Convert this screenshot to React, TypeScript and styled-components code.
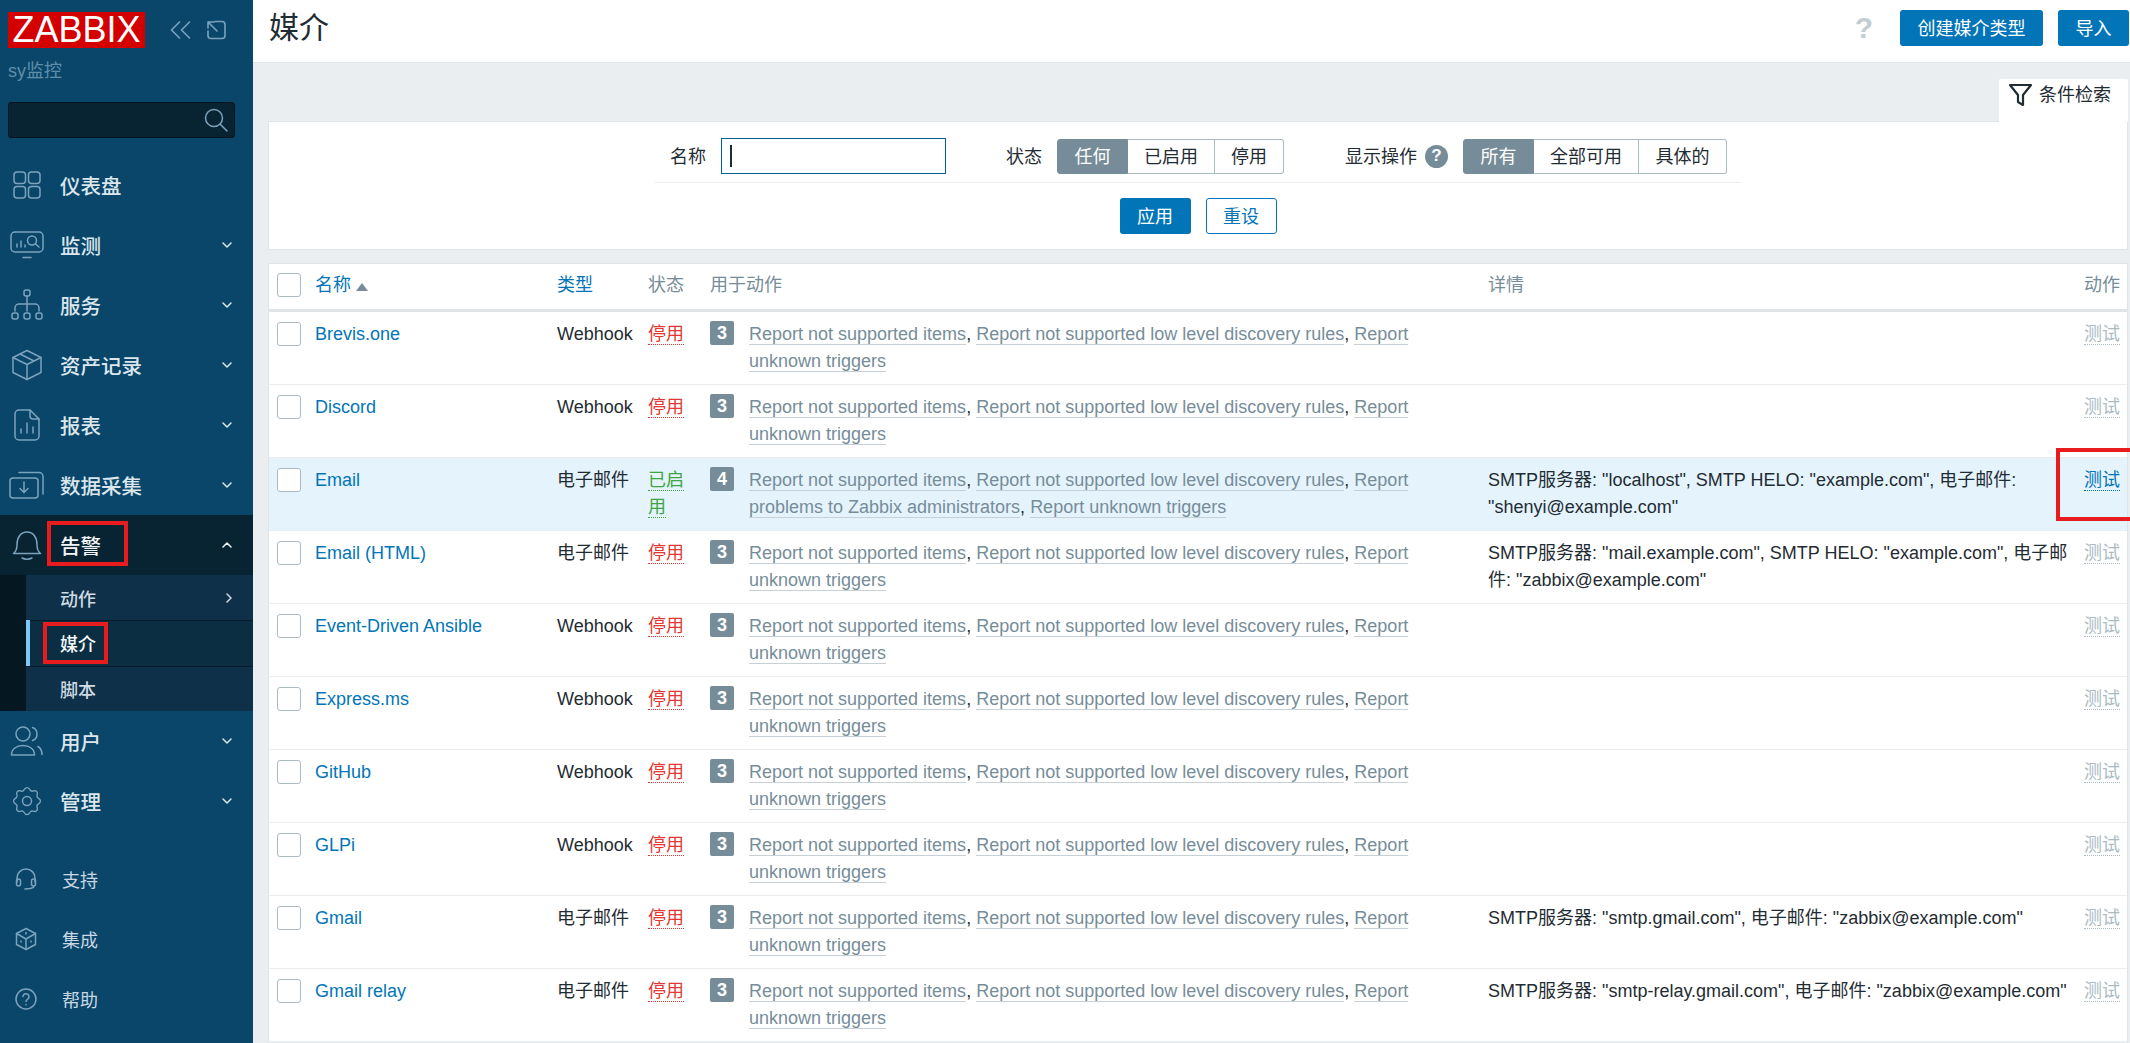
import React from "react";
import styled, { createGlobalStyle } from "styled-components";

const Global = createGlobalStyle`
  html, body { margin: 0; padding: 0; height: 100%; overflow: hidden; background: #ebeef0; }
  body { font-family: "Liberation Sans", "Noto Sans CJK SC", sans-serif; font-size: 18px; color: #1f2c33; }
  * { box-sizing: border-box; }
`;

const Page = styled.div`
  display: flex;
  width: 2130px;
  height: 1043px;
  overflow: hidden;
`;

/* ---------- sidebar ---------- */
const Sidebar = styled.aside`
  flex: 0 0 253px;
  display: flex;
  flex-direction: column;
  background: #0a466a;
  color: #dbe6ed;
`;
const Brand = styled.div`
  display: flex;
  align-items: center;
  padding: 12px 0 0 8px;
`;
const Logo = styled.div`
  width: 137px;
  height: 36px;
  background: #d40000;
  color: #fff;
  font-size: 36px;
  line-height: 36px;
  text-align: center;
  font-family: "Liberation Sans", sans-serif;
`;
const BrandIcons = styled.div`
  display: flex;
  align-items: center;
  gap: 15px;
  margin-left: 25px;
  color: #7ba3bd;
`;
const Instance = styled.div`
  margin: 11px 0 0 8px;
  font-size: 18px;
  line-height: 24px;
  color: #5f8fab;
`;
const SearchBox = styled.div`
  display: flex;
  align-items: center;
  justify-content: flex-end;
  width: 227px;
  height: 36px;
  margin: 19px 0 17px 8px;
  padding-right: 6px;
  background: #082433;
  border: 1px solid #05151f;
  border-radius: 3px;
  color: #7ba3bd;
`;
const Nav = styled.nav`
  display: flex;
  flex-direction: column;
`;
const NavRow = styled.div<{ $active?: boolean }>`
  position: relative;
  display: flex;
  align-items: center;
  height: 60px;
  padding-right: 21px;
  background: ${(p) => (p.$active ? "#082433" : "transparent")};
  color: ${(p) => (p.$active ? "#f4f7f9" : "#dbe6ed")};
`;
const NavIcon = styled.span`
  flex: 0 0 60px;
  display: flex;
  justify-content: center;
  padding-right: 6px;
  color: #7ba3bd;
`;
const NavLabel = styled.span`
  flex: 1;
  font-size: 20.5px;
  font-weight: 500;
`;
const SubWrap = styled.div`
  display: grid;
  grid-template-rows: 45px 46px 45px;
  padding-left: 26px;
  background: #051821;
`;
const SubRow = styled.div<{ $current?: boolean }>`
  position: relative;
  display: flex;
  align-items: center;
  padding: 0 21px 0 ${(p) => (p.$current ? "30px" : "34px")};
  font-size: 18px;
  font-weight: 500;
  background: ${(p) => (p.$current ? "#0b2e42" : "#0e3049")};
  color: ${(p) => (p.$current ? "#f4f7f9" : "#cfdbe3")};
  border-left: ${(p) => (p.$current ? "4px solid #7ec8f8" : "0")};
  &:not(:first-child) { box-shadow: inset 0 1px 0 #061c2a; }
`;
const SubLabel = styled.span`
  flex: 1;
`;
const FooterNav = styled.div`
  display: flex;
  flex-direction: column;
  margin-top: 18px;
`;
const FooterRow = styled.div`
  display: flex;
  align-items: center;
  height: 60px;
  font-size: 18px;
  color: #c9d8e2;
`;
const FooterIcon = styled.span`
  flex: 0 0 62px;
  display: flex;
  justify-content: center;
  padding-right: 11px;
  color: #7ba3bd;
`;
const RedBox = styled.span<{ $l: number; $t: number; $w: number; $h: number }>`
  position: absolute;
  left: ${(p) => p.$l}px;
  top: ${(p) => p.$t}px;
  width: ${(p) => p.$w}px;
  height: ${(p) => p.$h}px;
  border: 4px solid #e81c1f;
  pointer-events: none;
`;

/* ---------- main ---------- */
const Main = styled.main`
  flex: 1;
  min-width: 0;
  display: flex;
  flex-direction: column;
`;
const Header = styled.header`
  display: flex;
  align-items: center;
  height: 63px;
  padding: 0 1px 6px 16px;
  background: #fff;
  border-bottom: 1px solid #dfe4e7;
`;
const Title = styled.h1`
  flex: 1;
  margin: 0;
  font-size: 30px;
  font-weight: 400;
  line-height: 40px;
  color: #1f2c33;
`;
const HelpMark = styled.span`
  margin-right: 27px;
  font-size: 30px;
  font-weight: 700;
  line-height: 36px;
  color: #c3ced4;
`;
const PrimaryButton = styled.button`
  height: 36px;
  padding: 0 17.5px 2px;
  border: 0;
  border-radius: 3px;
  background: #0275b8;
  color: #fff;
  font: inherit;
  font-size: 18px;
  & + & { margin-left: 15px; }
`;
const Content = styled.div`
  flex: 1;
  padding: 16px 2px 0 15px;
  overflow: hidden;
`;
const TabRow = styled.div`
  display: flex;
  justify-content: flex-end;
`;
const FilterTab = styled.div`
  display: flex;
  align-items: flex-start;
  gap: 6px;
  width: 129px;
  height: 43px;
  margin-bottom: -1px;
  padding: 4px 0 0 9px;
  background: #fff;
  font-size: 18px;
  line-height: 24px;
  border-radius: 2px 2px 0 0;
  position: relative;
  z-index: 1;
`;
const FilterPanel = styled.section`
  height: 129px;
  padding-top: 17px;
  background: #fff;
  border: 1px solid #dfe4e7;
`;
const FilterGrid = styled.div`
  display: flex;
  align-items: center;
  width: 1086px;
  height: 44px;
  margin: 0 auto;
  padding: 0 0 9px 15px;
  border-bottom: 1px solid #ebeef0;
`;
const FieldLabel = styled.label<{ $gap: number; $lead?: number }>`
  margin-left: ${(p) => p.$lead ?? 0}px;
  margin-right: ${(p) => p.$gap}px;
  padding-bottom: 2px;
  font-size: 18px;
`;
const TextInput = styled.div`
  display: flex;
  align-items: center;
  width: 225px;
  height: 36px;
  padding-left: 8px;
  border: 1px solid #015e94;
  background: #fff;
`;
const Caret = styled.span`
  width: 2px;
  height: 22px;
  background: #1f2c33;
`;
const Segmented = styled.div`
  display: flex;
  height: 35px;
`;
const Segment = styled.div<{ $on?: boolean; $w: number }>`
  display: flex;
  align-items: center;
  justify-content: center;
  width: ${(p) => p.$w}px;
  padding-bottom: 2px;
  font-size: 18px;
  background: ${(p) => (p.$on ? "#768d99" : "#fff")};
  color: ${(p) => (p.$on ? "#fff" : "#1f2c33")};
  border: 1px solid ${(p) => (p.$on ? "#768d99" : "#acbbc2")};
  border-left-width: ${(p) => (p.$on ? 1 : 0)}px;
  &:first-child { border-radius: 3px 0 0 3px; }
  &:last-child { border-radius: 0 3px 3px 0; }
`;
const HelpDot = styled.span`
  display: flex;
  align-items: center;
  justify-content: center;
  width: 23px;
  height: 23px;
  margin-right: 15px;
  border-radius: 50%;
  background: #768d99;
  color: #fff;
  font-size: 17px;
  font-weight: 700;
`;
const FilterActions = styled.div`
  display: flex;
  justify-content: center;
  gap: 15px;
  margin-top: 15px;
`;
const ApplyButton = styled.button`
  width: 71px;
  height: 36px;
  padding: 0 0 2px;
  border: 0;
  border-radius: 3px;
  background: #0275b8;
  color: #fff;
  font: inherit;
`;
const ResetButton = styled(ApplyButton)`
  background: #fff;
  color: #0275b8;
  border: 1px solid #0275b8;
`;

const Table = styled.table`
  width: 1860px;
  margin-top: 13px;
  table-layout: fixed;
  border-collapse: separate;
  border-spacing: 0;
  background: #fff;
  border-top: 1px solid #dfe4e7;
  border-left: 1px solid #dfe4e7;
  border-right: 1px solid #dfe4e7;
  font-size: 18px;
  line-height: 27px;
  color: #1f2c33;
`;
const Th = styled.th`
  height: 48px;
  padding: 0 8px 3px;
  font-weight: 400;
  text-align: left;
  color: #768d99;
  white-space: nowrap;
  border-bottom: 3px solid #dfe4e7;
`;
const SortLink = styled.span`
  color: #0275b8;
`;
const SortArrow = styled.i`
  display: inline-block;
  width: 0;
  height: 0;
  margin-left: 5px;
  border-left: 6px solid transparent;
  border-right: 6px solid transparent;
  border-bottom: 8px solid #768d99;
`;
const Tr = styled.tr<{ $hl?: boolean }>`
  background: ${(p) => (p.$hl ? "#e5f3fd" : "#fff")};
`;
const Td = styled.td`
  position: relative;
  height: 73px;
  padding: 9px 8px;
  vertical-align: top;
  border-bottom: 1px solid #ebeef0;
`;
const Check = styled.span`
  display: block;
  width: 24px;
  height: 24px;
  margin-top: 1px;
  background: #fff;
  border: 1px solid #acbbc2;
  border-radius: 3px;
`;
const HeadCheck = styled(Check)`
  margin-top: 0;
`;
const Link = styled.a`
  color: #0275b8;
`;
const Status = styled.span<{ $on?: boolean }>`
  color: ${(p) => (p.$on ? "#3da643" : "#e33734")};
  border-bottom: 1px dotted currentColor;
`;
const UsedWrap = styled.div`
  display: flex;
  align-items: flex-start;
`;
const Badge = styled.span`
  flex: 0 0 24px;
  height: 24px;
  margin-right: 15px;
  background: #768d99;
  border-radius: 2px;
  color: #fff;
  font-weight: 700;
  font-size: 18px;
  line-height: 24px;
  text-align: center;
`;
const UsedText = styled.div`
  color: #1f2c33;
`;
const ActionLink = styled.span`
  color: #768d99;
  border-bottom: 1px solid #c6d0d6;
`;
const TestLink = styled.span<{ $on?: boolean }>`
  color: ${(p) => (p.$on ? "#0275b8" : "#acbbc2")};
  white-space: nowrap;
  border-bottom: 1px dotted currentColor;
`;

/* ---------- icons ---------- */
const Svg: React.FC<{ w: number; h?: number; sw?: number; children: React.ReactNode }> = ({ w, h, sw = 1.5, children }) => (
  <svg width={w} height={h ?? w} viewBox={`0 0 ${w} ${h ?? w}`} fill="none" stroke="currentColor" strokeWidth={sw} strokeLinecap="round" strokeLinejoin="round">
    {children}
  </svg>
);

const IDash = () => (
  <Svg w={28}>
    <rect x="1" y="1" width="11.5" height="11.5" rx="3" />
    <rect x="15.5" y="1" width="11.5" height="11.5" rx="3" />
    <rect x="1" y="15.5" width="11.5" height="11.5" rx="3" />
    <rect x="15.5" y="15.5" width="11.5" height="11.5" rx="3" />
  </Svg>
);
const IMonitor = () => (
  <Svg w={34} h={28}>
    <rect x="1" y="1" width="32" height="20" rx="4" />
    <path d="M13 26.5h8M7 16v-3M11 16v-6M15 16v-2" />
    <circle cx="22" cy="9.5" r="4.5" />
    <path d="M25.5 13l3.5 3" />
  </Svg>
);
const IServices = () => (
  <Svg w={34} h={32}>
    <rect x="14" y="1" width="6" height="6" rx="2" />
    <path d="M17 7v8M5 22v-3a4 4 0 0 1 4-4h16a4 4 0 0 1 4 4v3M17 15v7" />
    <rect x="2" y="24" width="6" height="6" rx="2" />
    <rect x="14" y="24" width="6" height="6" rx="2" />
    <rect x="26" y="24" width="6" height="6" rx="2" />
  </Svg>
);
const IBox = () => (
  <Svg w={32}>
    <path d="M16 1.5 30 8.5v15L16 30.5 2 23.5v-15z" />
    <path d="M2 8.5 16 15.5 30 8.5M16 15.5v15M9 5l14 7" />
  </Svg>
);
const IReport = () => (
  <Svg w={28} h={32}>
    <path d="M17 1H6a4 4 0 0 0-4 4v22a4 4 0 0 0 4 4h16a4 4 0 0 0 4-4V10z" />
    <path d="M17 1v6a3 3 0 0 0 3 3h6M8 24v-4M14 24v-10M20 24v-6" />
  </Svg>
);
const IData = () => (
  <Svg w={36} h={28}>
    <rect x="1" y="7" width="28" height="20" rx="3" />
    <path d="M10 1.5h20a4 4 0 0 1 4 4V23M15 11v10M11 17.5l4 4 4-4" />
  </Svg>
);
const IBell = () => (
  <Svg w={30}>
    <path d="M1.5 23.5c2.5-2 3.5-4 3.5-9C5 7 9 2 15 2s10 5 10 12.500c0 5 1 7 3.500 9z" />
    <path d="M10 28c3 1.500 7 1.500 10 0" />
  </Svg>
);
const IUsers = () => (
  <Svg w={34} h={30}>
    <circle cx="13" cy="8" r="7" />
    <path d="M1.500 29c0-6 5-9.500 11.500-9.500S24.500 23 24.500 29zM22.500 1.500c3 1 4.500 3.500 4.500 6.500s-1.500 5.500-4.500 6.500M28 20.500c2.500 1.500 4 4 4 8" />
  </Svg>
);
const IGear = () => (
  <Svg w={32}>
    <circle cx="16" cy="16" r="4.500" />
    <path d="M13.500 2.500a3 3 0 0 1 5 0l.8 1.200a3 3 0 0 0 3.300 1.300l1.400-.4a3 3 0 0 1 3.500 3.500l-.4 1.400a3 3 0 0 0 1.300 3.300l1.200.8a3 3 0 0 1 0 5l-1.200.8a3 3 0 0 0-1.300 3.300l.4 1.400a3 3 0 0 1-3.500 3.500l-1.400-.4a3 3 0 0 0-3.300 1.300l-.8 1.200a3 3 0 0 1-5 0l-.8-1.200a3 3 0 0 0-3.300-1.300l-1.400.4a3 3 0 0 1-3.500-3.500l.4-1.400a3 3 0 0 0-1.300-3.300l-1.200-.8a3 3 0 0 1 0-5l1.200-.8a3 3 0 0 0 1.300-3.300l-.4-1.400a3 3 0 0 1 3.500-3.500l1.400.4a3 3 0 0 0 3.300-1.300z" transform="translate(1.600 1.600) scale(.9)" />
  </Svg>
);
const IHeadset = () => (
  <Svg w={22} h={22}>
    <path d="M2 14V10a9 9 0 0 1 18 0v4" />
    <rect x="1.500" y="11" width="4" height="7" rx="2" />
    <rect x="16.500" y="11" width="4" height="7" rx="2" />
    <path d="M19 18c0 2-2 2-4 2.500l-5 .5" />
  </Svg>
);
const IDice = () => (
  <Svg w={22} h={24}>
    <path d="M11 1.500l9.500 5v11l-9.500 5-9.500-5v-11z" />
    <path d="M1.500 6.500 11 12l9.500-5.500M11 12v10.500M11 5.500v1.500M6 14v1M16 14v1" />
  </Svg>
);
const IHelp = () => (
  <Svg w={22}>
    <circle cx="11" cy="11" r="10" />
    <path d="M8 8.500a3 3 0 1 1 4.500 2.800c-1 .6-1.500 1.200-1.500 2.200M11 16.500v.2" />
  </Svg>
);
const IChevDown = () => (
  <Svg w={10} h={6}>
    <path d="M1 1l4 4 4-4" />
  </Svg>
);
const IChevUp = () => (
  <Svg w={10} h={6}>
    <path d="M1 5l4-4 4 4" />
  </Svg>
);
const IChevRight = () => (
  <Svg w={6} h={10}>
    <path d="M1 1l4 4-4 4" />
  </Svg>
);
const ICollapse = () => (
  <Svg w={21} h={18} sw={1.6}>
    <path d="M9.500 1 1.500 9l8 8M19.500 1l-8 8 8 8" />
  </Svg>
);
const IWindow = () => (
  <Svg w={20} sw={1.6}>
    <path d="M9 1.500h7a3 3 0 0 1 3 3v11a3 3 0 0 1-3 3H5a3 3 0 0 1-3-3V11M2 2l9 9M2 2v6M2 2h6" />
  </Svg>
);
const ISearch = () => (
  <Svg w={24}>
    <circle cx="10" cy="10" r="8.500" />
    <path d="M16.500 16.500 23 23" />
  </Svg>
);
const IFunnel = () => (
  <Svg w={25} h={24} sw={2.2}>
    <path d="M2 2h21l-8 10v10l-5-3v-7z" />
  </Svg>
);

/* ---------- data ---------- */
const R = {
  a: "Report not supported items",
  b: "Report not supported low level discovery rules",
  c: "Report problems to Zabbix administrators",
  d: "Report unknown triggers",
};
type Row = { name: string; type: string; on?: boolean; count: number; actions: string[]; details?: string };
const base = [R.a, R.b, R.d];
const rows: Row[] = [
  { name: "Brevis.one", type: "Webhook", count: 3, actions: base },
  { name: "Discord", type: "Webhook", count: 3, actions: base },
  { name: "Email", type: "电子邮件", on: true, count: 4, actions: [R.a, R.b, R.c, R.d], details: 'SMTP服务器: "localhost", SMTP HELO: "example.com", 电子邮件: "shenyi@example.com"' },
  { name: "Email (HTML)", type: "电子邮件", count: 3, actions: base, details: 'SMTP服务器: "mail.example.com", SMTP HELO: "example.com", 电子邮件: "zabbix@example.com"' },
  { name: "Event-Driven Ansible", type: "Webhook", count: 3, actions: base },
  { name: "Express.ms", type: "Webhook", count: 3, actions: base },
  { name: "GitHub", type: "Webhook", count: 3, actions: base },
  { name: "GLPi", type: "Webhook", count: 3, actions: base },
  { name: "Gmail", type: "电子邮件", count: 3, actions: base, details: 'SMTP服务器: "smtp.gmail.com", 电子邮件: "zabbix@example.com"' },
  { name: "Gmail relay", type: "电子邮件", count: 3, actions: base, details: 'SMTP服务器: "smtp-relay.gmail.com", 电子邮件: "zabbix@example.com"' },
];

const navTop = [
  { label: "仪表盘", icon: <IDash />, chev: false },
  { label: "监测", icon: <IMonitor />, chev: true },
  { label: "服务", icon: <IServices />, chev: true },
  { label: "资产记录", icon: <IBox />, chev: true },
  { label: "报表", icon: <IReport />, chev: true },
  { label: "数据采集", icon: <IData />, chev: true },
];

export default function App() {
  return (
    <Page>
      <Global />
      <Sidebar>
        <Brand>
          <Logo>ZABBIX</Logo>
          <BrandIcons>
            <ICollapse />
            <IWindow />
          </BrandIcons>
        </Brand>
        <Instance>sy监控</Instance>
        <SearchBox>
          <ISearch />
        </SearchBox>
        <Nav>
          {navTop.map((n) => (
            <NavRow key={n.label}>
              <NavIcon>{n.icon}</NavIcon>
              <NavLabel>{n.label}</NavLabel>
              {n.chev && <IChevDown />}
            </NavRow>
          ))}
          <NavRow $active>
            <NavIcon>
              <IBell />
            </NavIcon>
            <NavLabel>告警</NavLabel>
            <IChevUp />
            <RedBox $l={47} $t={6} $w={81} $h={45} />
          </NavRow>
          <SubWrap>
            <SubRow>
              <SubLabel>动作</SubLabel>
              <IChevRight />
            </SubRow>
            <SubRow $current>
              <SubLabel>媒介</SubLabel>
              <RedBox $l={13} $t={2} $w={65} $h={42} />
            </SubRow>
            <SubRow>
              <SubLabel>脚本</SubLabel>
            </SubRow>
          </SubWrap>
          <NavRow>
            <NavIcon>
              <IUsers />
            </NavIcon>
            <NavLabel>用户</NavLabel>
            <IChevDown />
          </NavRow>
          <NavRow>
            <NavIcon>
              <IGear />
            </NavIcon>
            <NavLabel>管理</NavLabel>
            <IChevDown />
          </NavRow>
        </Nav>
        <FooterNav>
          <FooterRow>
            <FooterIcon>
              <IHeadset />
            </FooterIcon>
            支持
          </FooterRow>
          <FooterRow>
            <FooterIcon>
              <IDice />
            </FooterIcon>
            集成
          </FooterRow>
          <FooterRow>
            <FooterIcon>
              <IHelp />
            </FooterIcon>
            帮助
          </FooterRow>
        </FooterNav>
      </Sidebar>

      <Main>
        <Header>
          <Title>媒介</Title>
          <HelpMark>?</HelpMark>
          <PrimaryButton>创建媒介类型</PrimaryButton>
          <PrimaryButton>导入</PrimaryButton>
        </Header>
        <Content>
          <TabRow>
            <FilterTab>
              <IFunnel />
              条件检索
            </FilterTab>
          </TabRow>
          <FilterPanel>
            <FilterGrid>
              <FieldLabel $gap={15}>名称</FieldLabel>
              <TextInput>
                <Caret />
              </TextInput>
              <FieldLabel $lead={60} $gap={15}>状态</FieldLabel>
              <Segmented>
                <Segment $on $w={71}>任何</Segment>
                <Segment $w={87}>已启用</Segment>
                <Segment $w={69}>停用</Segment>
              </Segmented>
              <FieldLabel $lead={61} $gap={8}>显示操作</FieldLabel>
              <HelpDot>?</HelpDot>
              <Segmented>
                <Segment $on $w={71}>所有</Segment>
                <Segment $w={105}>全部可用</Segment>
                <Segment $w={88}>具体的</Segment>
              </Segmented>
            </FilterGrid>
            <FilterActions>
              <ApplyButton>应用</ApplyButton>
              <ResetButton>重设</ResetButton>
            </FilterActions>
          </FilterPanel>

          <Table>
            <colgroup>
              <col width={38} />
              <col width={242} />
              <col width={91} />
              <col width={62} />
              <col width={778} />
              <col width={596} />
              <col width={51} />
            </colgroup>
            <thead>
              <tr>
                <Th>
                  <HeadCheck />
                </Th>
                <Th>
                  <SortLink>名称</SortLink>
                  <SortArrow />
                </Th>
                <Th>
                  <SortLink>类型</SortLink>
                </Th>
                <Th>状态</Th>
                <Th>用于动作</Th>
                <Th>详情</Th>
                <Th>动作</Th>
              </tr>
            </thead>
            <tbody>
              {rows.map((r) => (
                <Tr key={r.name} $hl={r.on}>
                  <Td>
                    <Check />
                  </Td>
                  <Td>
                    <Link>{r.name}</Link>
                  </Td>
                  <Td>{r.type}</Td>
                  <Td>
                    <Status $on={r.on}>{r.on ? "已启用" : "停用"}</Status>
                  </Td>
                  <Td>
                    <UsedWrap>
                      <Badge>{r.count}</Badge>
                      <UsedText>
                        {r.actions.map((a, i) => (
                          <React.Fragment key={a}>
                            {i > 0 && ", "}
                            <ActionLink>{a}</ActionLink>
                          </React.Fragment>
                        ))}
                      </UsedText>
                    </UsedWrap>
                  </Td>
                  <Td>{r.details}</Td>
                  <Td>
                    <TestLink $on={r.on}>测试</TestLink>
                    {r.on && <RedBox $l={-20} $t={-10} $w={85} $h={73} />}
                  </Td>
                </Tr>
              ))}
            </tbody>
          </Table>
        </Content>
      </Main>
    </Page>
  );
}
